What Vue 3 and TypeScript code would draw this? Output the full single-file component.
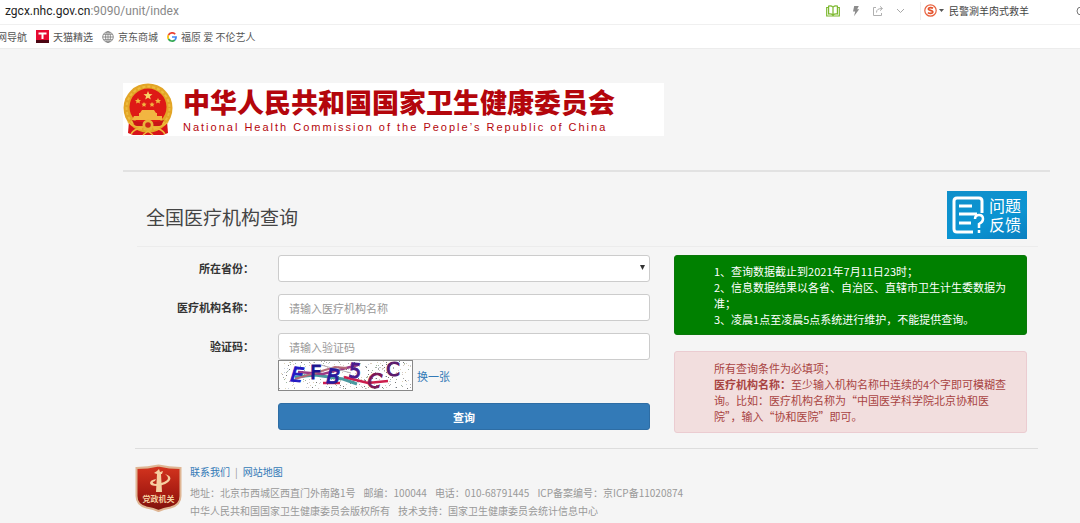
<script setup lang="ts">
import { ref } from 'vue'

interface Speck {
  x: number
  y: number
  fill: string
}

interface Glyph {
  char: string
  x: number
  y: number
  angle: number
  fill: string
  slanted: boolean
}

const province = ref('')
const orgName = ref('')
const code = ref('')

const palette = ['#a8a8a8', '#d3c9c4', '#a0b8a2', '#c6cfde', '#777777', '#ddd2b8']

function makeSpecks(count: number): Speck[] {
  let seed = 4711
  const next = (limit: number): number => {
    seed = (seed * 1103515245 + 12345) % 2147483648
    return Math.floor((seed / 2147483648) * limit)
  }
  return Array.from({ length: count }, () => ({
    x: 1 + next(132),
    y: 1 + next(28),
    fill: palette[next(palette.length)],
  }))
}

const specks = makeSpecks(320)

const glyphs: Glyph[] = [
  { char: 'E', x: 12, y: 21, angle: 6, fill: '#2218c4', slanted: true },
  { char: 'F', x: 32, y: 19, angle: 0, fill: '#1c1290', slanted: false },
  { char: 'B', x: 48, y: 23, angle: 3, fill: '#2a1a9c', slanted: true },
  { char: '5', x: 70, y: 17, angle: 6, fill: '#4a1a8c', slanted: false },
  { char: 'C', x: 89, y: 27, angle: 6, fill: '#7c1658', slanted: true },
  { char: 'C', x: 108, y: 16, angle: 0, fill: '#5a1a6c', slanted: false },
]
</script>

<template>
  <div class="window">
    <header class="chrome">
      <div class="address-bar">
        <div class="url">zgcx.nhc.gov.cn<span class="url-path">:9090/unit/index</span></div>
        <div class="tools">
          <button class="tool" type="button" aria-label="阅读模式">
            <svg width="14" height="12" viewBox="0 0 14 12" fill="none" stroke="#7cb82f" stroke-width="1.2">
              <path d="M7 2.2C5.8 1 4 .8 2.6 1.2V9c1.600-.3 3.300 0 4.400 1 1.100-1 2.800-1.300 4.400-1V1.200C10 .8 8.200 1 7 2.200zM7 2.200V10M2.600 2.500H.7V11h12.600V2.500h-1.900" />
            </svg>
          </button>
          <button class="tool" type="button" aria-label="极速模式">
            <svg width="8" height="12" viewBox="0 0 8 12" fill="#8c8c8c"><path d="M2.200 1h4.600L5.200 4.300h2L2 11.200l1.200-4.700H1z" /></svg>
          </button>
          <button class="tool" type="button" aria-label="分享">
            <svg width="12" height="12" viewBox="0 0 12 12" fill="none" stroke="#b0b0b0">
              <path d="M4 2.500H1.500v8h8V8M4.500 7.500C4.500 4.500 6.500 3.500 10 3.500M8 1.300l2.500 2.200L8 5.700" />
            </svg>
          </button>
          <button class="tool" type="button" aria-label="更多">
            <svg width="9" height="6" viewBox="0 0 9 6" fill="none" stroke="#a8a8a8"><path d="M1 1l3.500 3.500L8 1" /></svg>
          </button>
        </div>
        <div class="search">
          <svg width="13" height="13" viewBox="0 0 13 13" fill="none">
            <circle cx="6.500" cy="6.500" r="5.700" stroke="#e8603c" stroke-width="1.200" />
            <path d="M9 4.200C7.800 3.300 4.300 3.200 4.300 4.900c0 1.600 4.600 1.300 4.600 3.100 0 1.800-3.600 1.700-5 .6" stroke="#e4512a" stroke-width="1.700" />
          </svg>
          <svg class="caret" width="5" height="3" viewBox="0 0 5 3" fill="#555"><path d="M0 0h5L2.500 3z" /></svg>
          <span class="search-text">民警涮羊肉式救羊</span>
          <svg width="4" height="10" viewBox="0 0 4 10" fill="none" stroke="#777"><circle cx="5" cy="5" r="4" /></svg>
        </div>
      </div>
      <nav class="bookmarks">
        <a class="bookmark" href="#">网导航</a>
        <a class="bookmark" href="#">
          <svg width="13" height="13" viewBox="0 0 13 13">
            <rect width="13" height="13" fill="#e60a32" />
            <rect y="10" width="13" height="3" fill="#4c0512" />
            <path d="M2.500 2.500h8v2h-3V9h-2V4.500h-3z" fill="#fff" />
          </svg>天猫精选</a>
        <a class="bookmark" href="#">
          <svg width="12" height="12" viewBox="0 0 12 12" fill="none" stroke="#777" stroke-width=".8">
            <circle cx="6" cy="6" r="5.300" />
            <ellipse cx="6" cy="6" rx="2.400" ry="5.300" />
            <path d="M.7 6h10.600M6 .7v10.600M1.500 3.300h9M1.500 8.700h9" />
          </svg>京东商城</a>
        <a class="bookmark" href="#">
          <svg width="10" height="10" viewBox="0 0 10 10" fill="none" stroke-width="1.700">
            <path d="M8.200 2.200A4.100 4.100 0 0 0 1.500 3" stroke="#ea4335" />
            <path d="M1.500 3a4.100 4.100 0 0 0 0 4" stroke="#fbbc05" />
            <path d="M1.500 7a4.100 4.100 0 0 0 6.300 1" stroke="#34a853" />
            <path d="M7.800 8A4 4 0 0 0 9.100 5H5" stroke="#4285f4" />
          </svg>福原 爱 不伦艺人</a>
      </nav>
    </header>

    <div class="page">
      <div class="banner">
        <svg width="50" height="53" viewBox="0 0 50 53">
          <path d="M6 38l-1 12 5 2h30l5-2-1-12z" fill="#d8141a" />
          <circle cx="25" cy="25" r="24.500" fill="#e3a526" />
          <circle cx="25" cy="25" r="21.500" fill="none" stroke="#edbb3c" stroke-width="2" stroke-dasharray="3 2" />
          <circle cx="25" cy="24" r="18.500" fill="#de1a16" />
          <path d="M25 8l1.200 3.100 3.300.1-2.600 2.100.9 3.200-2.800-1.800-2.800 1.800.9-3.200-2.600-2.100 3.300-.1z" fill="#f8d568" />
          <g fill="#f2b541">
            <path d="M15 15l1 1.900 2 .2-1.500 1.400.4 2-1.900-1-1.900 1 .4-2L12 17.100l2-.2zM35 15l1 1.900 2 .2-1.500 1.400.4 2-1.900-1-1.900 1 .4-2-1.500-1.400 2-.2zM21 19l.8 1.600 1.800.2-1.300 1.200.3 1.800-1.600-.9-1.600.9.300-1.800-1.300-1.200 1.800-.2zM29 19l.8 1.600 1.800.2-1.300 1.200.3 1.800-1.600-.9-1.600.9.300-1.800-1.300-1.200 1.800-.2z" />
            <path d="M19 27h12l2 3H17zM16 30h18v3H16zM11 33h28v4H9z" />
          </g>
          <path d="M9 37q16 5 32 0l-3 6H12z" fill="#c91518" />
          <circle cx="25" cy="42" r="5.500" fill="#e8b43a" />
          <circle cx="25" cy="42" r="2.800" fill="#cf281b" />
          <path d="M5 39q7 6 15 5M45 39q-7 6-15 5M8 51q4-6 11-5M42 51q-4-6-11-5M20 52l5-4 5 4" fill="none" stroke="#efb83b" stroke-width="1.500" />
        </svg>
        <div class="banner-text">
          <div class="banner-cn">中华人民共和国国家卫生健康委员会</div>
          <div class="banner-en">National Health Commission of the People’s Republic of China</div>
        </div>
      </div>

      <main class="main">
        <div class="title-row">
          <h1>全国医疗机构查询</h1>
          <button class="feedback" type="button">
            <svg width="34" height="38" viewBox="0 0 34 38" fill="none" stroke="#fff" stroke-width="3">
              <path d="M30 17V5q0-3-3-3H5Q2 2 2 5v28q0 3 3 3h16" />
              <path d="M7 10h13M7 18h18M7 27h12" />
              <path d="M23 23q0-4 4-4t4 4q0 3-4 5v4M27 34v3" stroke-width="2.500" />
            </svg>
            <span>问题<br>反馈</span>
          </button>
        </div>

        <div class="content">
          <form class="form" @submit.prevent>
            <label for="province">所在省份：</label>
            <div class="select-box">
              <select id="province" v-model="province" class="control">
                <option value=""></option>
                <option value="11">北京市</option>
                <option value="31">上海市</option>
              </select>
              <svg class="arrow" width="5" height="5" viewBox="0 0 5 5" fill="#333"><path d="M0 0h5L2.500 5z" /></svg>
            </div>
            <label for="org">医疗机构名称：</label>
            <input id="org" v-model="orgName" class="control" type="text" placeholder="请输入医疗机构名称">
            <label for="code">验证码：</label>
            <div>
              <input id="code" v-model="code" class="control" type="text" placeholder="请输入验证码">
              <div class="captcha-row">
                <svg class="captcha" width="135" height="31" viewBox="0 0 135 31" role="img" aria-label="验证码图片">
                  <rect x=".5" y=".5" width="134" height="30" fill="#fff" stroke="#888" />
                  <rect v-for="(s, i) in specks" :key="i" :x="s.x" :y="s.y" width="1" height="1" :fill="s.fill" />
                  <path d="M17 17l20-2 28 4 14 5" stroke="#4b9aa0" stroke-width="3" fill="none" />
                  <path d="M20 12l25 2 35-9" stroke="#9a3a84" stroke-width="2.500" fill="none" />
                  <path d="M17 19l40-12 12 1" stroke="#b56b78" stroke-width="2" fill="none" />
                  <path d="M45 23h17M66 17l24 6 20-2" stroke="#cc1e4c" stroke-width="2.500" fill="none" />
                  <path d="M43 5l30 8" stroke="#b5aeb8" fill="none" />
                  <text
                    v-for="(g, i) in glyphs"
                    :key="`g${i}`"
                    :class="{ slanted: g.slanted }"
                    :x="g.x"
                    :y="g.y"
                    :fill="g.fill"
                    :stroke="g.fill"
                    :transform="`rotate(${g.angle} ${g.x} ${g.y})`"
                  >{{ g.char }}</text>
                </svg>
                <a href="#">换一张</a>
              </div>
            </div>
            <button class="submit" type="submit">查询</button>
          </form>

          <aside class="side">
            <div class="notice green">
              1、查询数据截止到2021年7月11日23时；<br>
              2、信息数据结果以各省、自治区、直辖市卫生计生委数据为准；<br>
              3、凌晨1点至凌晨5点系统进行维护，不能提供查询。
            </div>
            <div class="notice red">
              所有查询条件为必填项；<br>
              <strong>医疗机构名称：</strong>至少输入机构名称中连续的4个字即可模糊查询。比如：医疗机构名称为“中国医学科学院北京协和医院”，输入“协和医院”即可。
            </div>
          </aside>
        </div>
      </main>

      <footer class="footer">
        <svg width="47" height="48" viewBox="0 0 47 48">
          <defs>
            <linearGradient id="shield" x1="0" y1="0" x2="0" y2="1">
              <stop offset="0" stop-color="#d5351f" />
              <stop offset=".6" stop-color="#a81c12" />
              <stop offset="1" stop-color="#7c120c" />
            </linearGradient>
          </defs>
          <path d="M1.500 4Q13 4 23.500 1.500 34 4 45.500 4v28q0 9-10 11.500Q28 45 23.500 47 19 45 11.500 43.500 1.500 41 1.500 32z" fill="url(#shield)" stroke="#dfb694" stroke-width="2" />
          <g fill="#f6cfa0">
            <path d="M22 7l2-2 1 3 3-1-1 3h-1l1 18h-6l1-18-3-1z" />
            <path d="M30 10q7 2 5 6-3 5-13 6-7 0-7-3 0-3 6-4l-1 2q-3 1-2 2 2 2 8 0 7-2 7-5 0-2-3-4z" />
          </g>
          <text class="shield-text" x="23.500" y="38" text-anchor="middle">党政机关</text>
        </svg>
        <div>
          <p class="links"><a href="#">联系我们</a><span>|</span><a href="#">网站地图</a></p>
          <p><span>地址：北京市西城区西直门外南路1号</span><span>邮编：100044</span><span>电话：010-68791445</span><span>ICP备案编号：京ICP备11020874</span></p>
          <p><span>中华人民共和国国家卫生健康委员会版权所有</span><span>技术支持：国家卫生健康委员会统计信息中心</span></p>
        </div>
      </footer>
    </div>
  </div>
</template>

<style>
body {
  background: #f5f5f5;
}
</style>

<style scoped>
* {
  box-sizing: border-box;
}
.window {
  font-family: "Noto Sans CJK SC", "Noto Sans", sans-serif;
  font-size: 11px;
  line-height: 16px;
  color: #333;
  overflow: hidden;
}
svg {
  display: block;
  flex: none;
}
a {
  color: #337ab7;
  text-decoration: none;
}
button,
input,
select {
  font: inherit;
}
.chrome {
  background: #fff;
  border-bottom: 1px solid #ececec;
  font-size: 10px;
}
.address-bar {
  display: flex;
  align-items: center;
  height: 25px;
  padding: 0 0 3px 5px;
  border-bottom: 1px solid #f0f0f0;
}
.url {
  flex: 1;
  font-family: Roboto, "Noto Sans", sans-serif;
  font-size: 12px;
  color: #222;
}
.url-path {
  color: #888;
}
.tools {
  display: flex;
  align-items: center;
  gap: 12px;
  padding-right: 15px;
}
.tool {
  padding: 0;
  border: 0;
  background: none;
}
.search {
  display: flex;
  align-items: center;
  width: 160px;
  height: 18px;
  padding-left: 3px;
  border-left: 1px solid #eee;
}
.caret {
  margin: 0 5px 0 2px;
}
.search-text {
  flex: 1;
  color: #444;
}
.bookmarks {
  display: flex;
  align-items: center;
  gap: 9px;
  height: 23px;
}
.bookmark {
  display: flex;
  align-items: center;
  gap: 4px;
  color: #555;
  white-space: nowrap;
}
.bookmark:first-child {
  margin-left: -3px;
}
.page {
  padding: 34px 30px 0 123px;
}
.banner {
  display: flex;
  gap: 10px;
  width: 541px;
  max-width: 100%;
  background: #fff;
  color: #b4060c;
  white-space: nowrap;
}
.banner-cn {
  padding-top: 3px;
  font-size: 27px;
  line-height: 32px;
  font-weight: 900;
}
.banner-en {
  padding-top: 1px;
  font-family: "Liberation Sans", Arial, sans-serif;
  font-size: 11px;
  line-height: 16px;
  letter-spacing: 2px;
}
.main {
  margin-top: 34px;
  padding: 19px 12px 0 14px;
  border-top: 2px solid #e2e2e2;
}
.title-row {
  display: flex;
  align-items: center;
  justify-content: space-between;
  padding: 0 11px 7px 9px;
  border-bottom: 1px solid #ececec;
}
h1 {
  margin: 0;
  padding-top: 4px;
  font-size: 19px;
  line-height: 24px;
  font-weight: 400;
  color: #444;
}
.feedback {
  display: flex;
  align-items: center;
  gap: 3px;
  width: 80px;
  height: 48px;
  padding: 0 5px;
  border: 0;
  background: linear-gradient(160deg, #0f8fca, #0b94d2 60%, #0a7fc0);
  color: #fff;
  font-size: 16px;
  line-height: 19px;
}
.content {
  display: grid;
  grid-template-columns: 513fr 353fr;
  gap: 24px;
  padding: 8px 11px 15px 0;
}
.form {
  display: grid;
  grid-template-columns: 117px 1fr;
  column-gap: 24px;
  row-gap: 12px;
  align-content: start;
}
.form label {
  text-align: right;
  font-weight: 700;
  line-height: 27px;
}
.control {
  display: block;
  width: 100%;
  height: 27px;
  padding: 0 10px;
  border: 1px solid #ccc;
  border-radius: 3px;
  background: #fff;
  color: #555;
  appearance: none;
}
.control::placeholder {
  color: #999;
}
.select-box {
  position: relative;
}
.arrow {
  position: absolute;
  top: 10px;
  right: 5px;
}
.captcha-row {
  display: flex;
  align-items: center;
  gap: 4px;
}
.captcha text {
  font-family: "DejaVu Sans", sans-serif;
  font-size: 20px;
  stroke-width: 1px;
}
.captcha .slanted {
  font-style: italic;
}
.submit {
  grid-column: 2;
  height: 27px;
  padding: 0;
  border: 1px solid #2e6da4;
  border-radius: 3px;
  background: #337ab7;
  color: #fff;
  font-weight: 700;
}
.side {
  display: flex;
  flex-direction: column;
  gap: 16px;
}
.notice {
  padding: 8px 14px 8px 39px;
  border: 1px solid;
  border-radius: 3px;
}
.green {
  padding-top: 7px;
  padding-bottom: 7px;
  border-color: #0a780a;
  background: #008000;
  color: #fff;
}
.red {
  border-color: #ebccd1;
  background: #f2dede;
  color: #a94442;
}
.footer {
  display: flex;
  gap: 8px;
  margin: 0 12px;
  padding: 15px 0 4px;
  border-top: 1px solid #ddd;
  font-size: 10px;
  color: #999;
}
.footer p {
  display: flex;
  gap: 8px;
  margin: 0;
  line-height: 18px;
  white-space: nowrap;
}
.footer .links {
  gap: 5px;
  margin-bottom: 4px;
  line-height: 16px;
}
.shield-text {
  font-size: 8px;
  font-weight: 700;
  fill: #f6cfa0;
}
</style>
